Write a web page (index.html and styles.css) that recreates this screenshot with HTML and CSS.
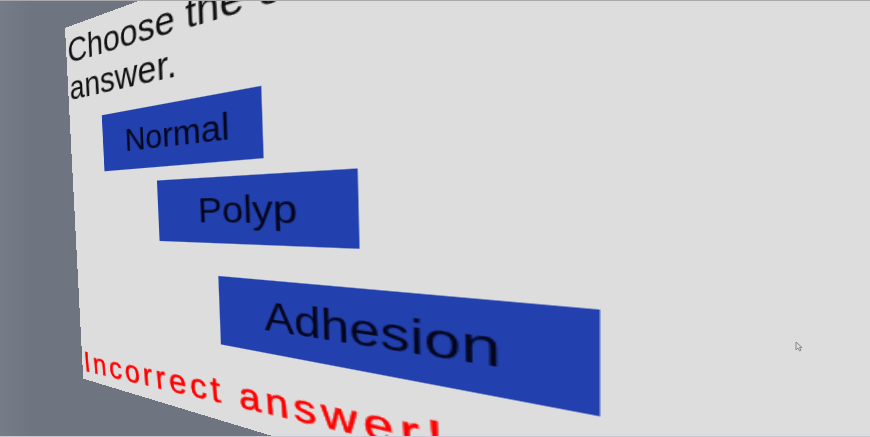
FILE: index.html
```html
<!DOCTYPE html>
<html lang="en">
<head>
  <meta charset="UTF-8" />
  <title>Quiz</title>
  <link rel="stylesheet" href="styles.css">
</head>
<body>
  <div class="scene">
    <div class="panel">
      <p class="question">Choose the correct<br>answer.</p>
      <button class="answer answer-normal">Normal</button>
      <button class="answer answer-polyp">Polyp</button>
      <button class="answer answer-adhesion">Adhesion</button>
      <p class="feedback">Incorrect answer!</p>
    </div>
    <svg class="cursor" width="8" height="11" viewBox="0 0 8 11">
      <path d="M1 1v8l2-2 1.500 3 1.500-.7L4.500 6.500H7z" fill="#ddd" stroke="#888" stroke-width="1"/>
    </svg>
  </div>
</body>
</html>
```

FILE: styles.css
```css
html, body {
  margin: 0;
  height: 100%;
}

.scene {
  position: relative;
  width: 870px;
  height: 437px;
  overflow: hidden;
  background: linear-gradient(90deg, #777d88 0, #6f7580 30px, #6f7580 100%);
  border-top: 1px solid #a9a9ad;
  border-bottom: 1px solid #c9c9d6;
  box-sizing: border-box;
}

.panel {
  position: absolute;
  left: 0;
  top: 0;
  width: 600px;
  height: 363px;
  box-sizing: border-box;
  padding: 0 0 0 2px;
  display: flex;
  flex-direction: column;
  align-items: flex-start;
  background-color: #dddddd;
  font-family: "Liberation Sans", Arial, sans-serif;
  transform-origin: 0 0;
  transform: matrix3d(0.657, -0.3154, 0, -0.00146, 0.0582, 1.0027, 0, 0.000097, 0, 0, 1, 0, 65, 27, 0, 1);
}

.question {
  margin: 6px 0 0;
  height: 88px;
  font-size: 34px;
  line-height: 37px;
  color: #111;
}

.answer {
  height: 54px;
  padding: 0;
  border: none;
  background-color: #2240ae;
  color: #03061c;
  font-family: inherit;
  font-size: 30px;
}

.answer-normal {
  width: 146px;
  margin-left: 38px;
}

.answer-polyp {
  width: 149px;
  margin: 12px 0 0 94px;
}

.answer-adhesion {
  width: 201px;
  height: 57px;
  margin: 27px 0 0 146px;
  padding-right: 2px;
  font-size: 31px;
}

.feedback {
  margin: 29px 0 0 1px;
  font-size: 30px;
  letter-spacing: 3.4px;
  white-space: nowrap;
  color: #ff0000;
  -webkit-text-stroke: 0.5px #ff0000;
  transform-origin: 0 100%;
  transform: rotate(-2.5deg);
}

.cursor {
  position: absolute;
  left: 795px;
  top: 340px;
}
```
